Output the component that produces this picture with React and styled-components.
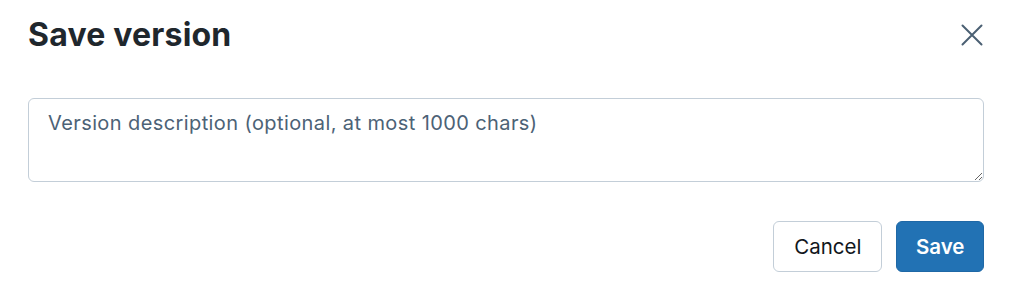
import styled, { createGlobalStyle } from "styled-components";

const GlobalStyle = createGlobalStyle`
    html, body {
        margin: 0;
        padding: 0;
        background: #fff;
    }
    body {
        font-family: Inter, "Liberation Sans", Arial, sans-serif;
    }
    * {
        box-sizing: border-box;
    }
`;

const App = () => {
    return (
        <>
            <GlobalStyle />
            <Dialog>
                <Header>
                    <Title>Save version</Title>
                    <CloseButton aria-label="Close">
                        <svg width="24" height="24" viewBox="0 0 24 24" fill="none">
                            <path
                                d="M2.5 2.5L21.5 21.5M21.5 2.5L2.5 21.5"
                                stroke="currentColor"
                                strokeWidth="2"
                                strokeLinecap="round"
                            />
                        </svg>
                    </CloseButton>
                </Header>
                <Body>
                    <Description
                        rows={2}
                        placeholder="Version description (optional, at most 1000 chars)"
                    />
                </Body>
                <Footer>
                    <Button>Cancel</Button>
                    <Button primary>Save</Button>
                </Footer>
            </Dialog>
        </>
    );
};

export default App;

const Dialog = styled.div`
    width: 1011px;
    padding: 15px 27px 0 28px;
    display: flex;
    flex-direction: column;
`;

const Header = styled.div`
    display: flex;
    justify-content: space-between;
    align-items: center;
    height: 40px;
`;

const Title = styled.h2`
    margin: 0;
    font-size: 32px;
    line-height: 40px;
    font-weight: 700;
    color: #1f272d;
    letter-spacing: 0.2px;
`;

const CloseButton = styled.button`
    width: 24px;
    height: 24px;
    padding: 0;
    border: none;
    background: transparent;
    color: #4b6073;
    display: flex;
    align-items: center;
    justify-content: center;
    cursor: pointer;
`;

const Body = styled.div`
    padding-top: 43px;
`;

const Description = styled.textarea`
    display: block;
    width: 100%;
    height: 84px;
    padding: 10px 19px;
    border: 1px solid #c3ced8;
    border-radius: 6px;
    font-family: Inter, "Liberation Sans", Arial, sans-serif;
    font-size: 20px;
    letter-spacing: 0.4px;
    line-height: 28px;
    color: #1f272d;
    resize: vertical;
    outline: none;
    &::placeholder {
        color: #4c6276;
    }
`;

const Footer = styled.div`
    display: flex;
    justify-content: flex-end;
    gap: 14px;
    padding-top: 39px;
`;

const Button = styled.button`
    height: 51px;
    padding: 0 ${(p) => (p.primary ? "18.5px" : "20px")};
    border-radius: 6px;
    font-family: Inter, "Liberation Sans", Arial, sans-serif;
    font-size: 20.5px;
    font-weight: ${(p) => (p.primary ? 600 : 400)};
    color: ${(p) => (p.primary ? "#fff" : "#11171c")};
    background: ${(p) => (p.primary ? "#2272b4" : "#fff")};
    border: 1px solid ${(p) => (p.primary ? "#1f68a6" : "#c3ced8")};
    cursor: pointer;
`;
